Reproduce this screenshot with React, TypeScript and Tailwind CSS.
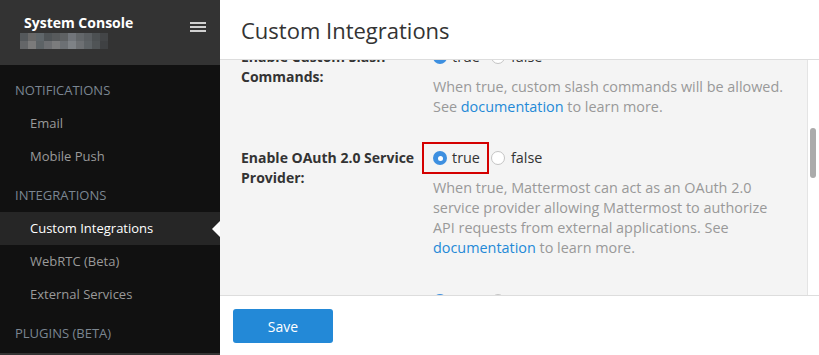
import React from "react";

const blurTop = ["#54585b", "#686868", "#5f666a", "#4f5457", "#575a5c", "#5e6163", "#71757a", "#63676a", "#5a5e61", "#4c5052", "#434547"];
const blurBot = ["#646668", "#7b7b7b", "#5d6366", "#6d6f72", "#7b7c7d", "#6c7074", "#7e8286", "#6d7073", "#5d6265", "#505456", "#3f4143"];

function Radio({ checked, className = "" }: { checked: boolean; className?: string }) {
  return checked ? (
    <span className={"w-[14px] h-[14px] rounded-full bg-[#3d8fe0] flex items-center justify-center shrink-0 " + className}>
      <span className="w-[5px] h-[5px] rounded-full bg-white" />
    </span>
  ) : (
    <span className={"block w-[14px] h-[14px] rounded-full bg-white border border-[#c4c4c4] shrink-0 " + className} />
  );
}

function Setting({
  label,
  value,
  children,
  highlight,
  extra = "",
}: {
  label: string;
  value: boolean;
  children?: React.ReactNode;
  highlight?: boolean;
  extra?: string;
}) {
  return (
    <div className={"flex mb-[31px] " + extra}>
      <div className="w-[192px] shrink-0 pr-[15px] font-bold text-[14px] leading-[20px] text-[#333]">{label}</div>
      <div className="w-[356px]">
        <div className="relative h-[20px] flex items-center text-[14.4px] leading-[20px] text-[#333]">
          {highlight && (
            <div className="absolute left-[-11px] top-[-6px] w-[67px] h-[32px] border-2 border-[#d40000]" />
          )}
          <Radio checked={value} />
          <span className="ml-[5px]">true</span>
          <Radio checked={!value} className="ml-[11px]" />
          <span className="ml-[6px]">false</span>
        </div>
        <div className="mt-[10px] text-[14.4px] leading-[20px] text-[#999]">{children}</div>
      </div>
    </div>
  );
}

export default function App() {
  return (
    <div className="w-[819px] h-[355px] flex overflow-hidden font-['Open_Sans',sans-serif]">
      {/* Sidebar */}
      <div className="w-[220px] shrink-0 flex flex-col bg-[#111]">
        <div className="h-[65px] shrink-0 bg-[#333] flex justify-between pl-[24px] pr-[14px] pt-[13px]">
          <div>
            <div className="text-[14px] leading-[20px] font-bold text-white">System Console</div>
            <div className="-ml-[4px] flex flex-col">
              <div className="flex">
                {blurTop.map((c, i) => (
                  <span key={i} className="w-[8px] h-[8px]" style={{ background: c }} />
                ))}
              </div>
              <div className="flex">
                {blurBot.map((c, i) => (
                  <span key={i} className="w-[8px] h-[8px]" style={{ background: c }} />
                ))}
              </div>
            </div>
          </div>
          <div className="mt-[9px] flex flex-col gap-[2px]">
            <span className="w-[16px] h-[2px] bg-[#d0d0d0]" />
            <span className="w-[16px] h-[2px] bg-[#d0d0d0]" />
            <span className="w-[16px] h-[2px] bg-[#d0d0d0]" />
          </div>
        </div>
        <div className="pt-[3px] flex flex-col flex-1 overflow-hidden">
          <div className="mt-[7px] h-[32px] shrink-0 flex items-center px-[15px] text-[13px] text-[#7b8691]">NOTIFICATIONS</div>
          <div className="h-[33px] shrink-0 flex items-center pl-[30px] text-[13px] text-[#9a9a9a]">Email</div>
          <div className="h-[33px] shrink-0 flex items-center pl-[30px] text-[13px] text-[#9a9a9a]">Mobile Push</div>
          <div className="mt-[7px] h-[32px] shrink-0 flex items-center px-[15px] text-[13px] text-[#7b8691]">INTEGRATIONS</div>
          <div className="relative h-[33px] shrink-0 flex items-center pl-[30px] text-[13px] text-white bg-[#262626]">
            Custom Integrations
            <span className="absolute right-0 top-[9px] w-0 h-0 border-y-[8px] border-y-transparent border-r-[8px] border-r-white" />
          </div>
          <div className="h-[33px] shrink-0 flex items-center pl-[30px] text-[13px] text-[#9a9a9a]">WebRTC (Beta)</div>
          <div className="h-[33px] shrink-0 flex items-center pl-[30px] text-[13px] text-[#9a9a9a]">External Services</div>
          <div className="mt-[7px] h-[32px] shrink-0 flex items-center px-[15px] text-[13px] text-[#7b8691]">PLUGINS (BETA)</div>
          <div className="h-[3px] shrink-0" />
          <div className="flex-1 bg-[#333]" />
        </div>
      </div>

      {/* Main */}
      <div className="flex-1 flex flex-col bg-white">
        <div className="h-[60px] shrink-0 border-b border-[#dddddd] flex items-center pl-[21px] text-[22px] leading-[30px] text-[#333]">
          Custom Integrations
        </div>
        <div className="flex-1 flex overflow-hidden bg-[#f4f4f4]">
          <div className="flex-1 overflow-hidden">
            <div className="-mt-[13px] pl-[21px]">
              <Setting label="Enable Custom Slash Commands:" value={true}>
                When true, custom slash commands will be allowed. See{" "}
                <span className="text-[#2389d7]">documentation</span> to learn more.
              </Setting>
              <Setting label="Enable OAuth 2.0 Service Provider:" value={true} highlight extra="mb-[33px]">
                When true, Mattermost can act as an OAuth 2.0 service provider allowing Mattermost to authorize
                API requests from external applications. See{" "}
                <span className="text-[#2389d7]">documentation</span> to learn more.
              </Setting>
              <Setting label="Enable Personal Access Tokens:" value={true}>
                When true, users can create personal access tokens for integrations.
              </Setting>
            </div>
          </div>
          <div className="w-[12px] shrink-0 bg-white border-l border-[#e4e4e4]">
            <div className="ml-[2px] mt-[68px] w-[6px] h-[50px] rounded-full bg-[#ababab]" />
          </div>
        </div>
        <div className="h-[60px] shrink-0 border-t border-[#dddddd] bg-white pt-[13px] pl-[13px]">
          <button className="w-[100px] h-[34px] rounded-[3px] bg-[#2389d7] text-white text-[14px]">Save</button>
        </div>
      </div>
    </div>
  );
}
